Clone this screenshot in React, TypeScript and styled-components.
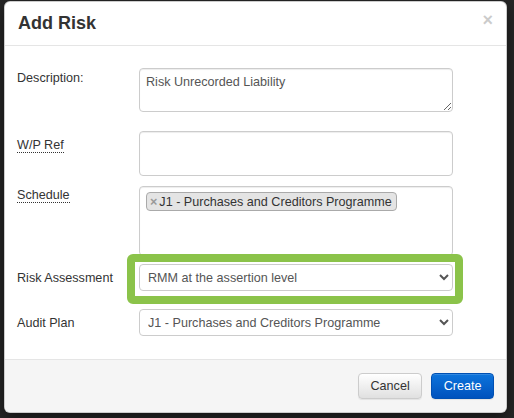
import styled, { createGlobalStyle } from "styled-components";

const GlobalStyle = createGlobalStyle`
  html, body {
    margin: 0;
    padding: 0;
    background: #262626;
  }
  body {
    font-family: "Liberation Sans", Arial, sans-serif;
    font-size: 12.6px;
    color: #333;
  }
  * {
    box-sizing: border-box;
  }
`

const Backdrop = styled.div`
  width: 514px;
  height: 418px;
  padding: 1px 0 0 4px;
  background: #262626;
`

const Modal = styled.div`
  width: 503px;
  background: #fff;
  border: 1px solid rgba(0, 0, 0, 0.2);
  border-radius: 6px;
  overflow: hidden;
  box-shadow: 0 5px 15px rgba(0, 0, 0, 0.5);
`

const Header = styled.div`
  display: flex;
  justify-content: space-between;
  align-items: center;
  height: 44px;
  padding: 0 13px 0 13px;
  border-bottom: 1px solid #e5e5e5;
`

const Title = styled.h4`
  margin: 0;
  font-size: 18px;
  font-weight: bold;
  color: #333;
`

const Close = styled.button`
  align-self: flex-start;
  margin-top: 9px;
  padding: 0;
  border: 0;
  background: none;
  font-family: "Liberation Sans", Arial, sans-serif;
  font-size: 18px;
  font-weight: bold;
  line-height: 1;
  color: #000;
  opacity: 0.2;
`

const Body = styled.div`
  padding: 22px 53px 23px 12px;
`

const FormGroup = styled.div<{ $gap: number }>`
  display: grid;
  grid-template-columns: 122px 314px;
  margin-bottom: ${p => p.$gap}px;
`

const Label = styled.label<{ $offset: number }>`
  padding-top: ${p => p.$offset}px;
  font-size: 12.6px;
  line-height: 18px;
  color: #333;
`

const Abbr = styled.span`
  border-bottom: 1px dotted #333;
`

const TextArea = styled.textarea<{ $height: number }>`
  display: block;
  width: 100%;
  height: ${p => p.$height}px;
  margin: 0;
  padding: 4px 6px;
  border: 1px solid #ccc;
  border-radius: 4px;
  box-shadow: inset 0 1px 1px rgba(0, 0, 0, 0.075);
  font-family: "Liberation Sans", Arial, sans-serif;
  font-size: 12.6px;
  line-height: 18px;
  color: #555;
  resize: vertical;
`

const TagBox = styled.div`
  height: 70px;
  padding: 5px 6px;
  border: 1px solid #ccc;
  border-radius: 4px;
  box-shadow: inset 0 1px 1px rgba(0, 0, 0, 0.075);
  background: #fff;
`

const Tag = styled.span`
  display: inline-flex;
  align-items: center;
  height: 19px;
  padding: 0 4px 0 3px;
  border: 1px solid #aaa;
  border-radius: 4px;
  background: #e4e4e4;
  font-size: 12.6px;
  color: #333;
`

const TagRemove = styled.span`
  margin-right: 2px;
  font-weight: bold;
  color: #999;
`

const Highlight = styled.div`
  position: relative;

  &::after {
    content: '';
    position: absolute;
    top: -10px;
    left: -12px;
    right: -10px;
    bottom: -13px;
    border: 8px solid #8bc34a;
    border-radius: 6px;
    pointer-events: none;
  }
`

const Select = styled.select`
  display: block;
  width: 100%;
  height: 27px;
  margin: 0;
  padding: 0 4px;
  border: 1px solid #ccc;
  border-radius: 4px;
  background: #fff;
  font-family: "Liberation Sans", Arial, sans-serif;
  font-size: 12.6px;
  color: #555;
`

const Footer = styled.div`
  display: flex;
  justify-content: flex-end;
  gap: 9px;
  padding: 13px 12px;
  border-top: 1px solid #e5e5e5;
  background: #f5f5f5;
`

const Button = styled.button<{ $primary?: boolean }>`
  height: 26px;
  padding: 0 11.5px;
  border: 1px solid ${p => (p.$primary ? "#0050b3" : "#ccc")};
  border-radius: 4px;
  background: ${p =>
    p.$primary
      ? "linear-gradient(to bottom, #0d74dc 0%, #0052bd 100%)"
      : "linear-gradient(to bottom, #fff 0%, #e0e0e0 100%)"};
  box-shadow: inset 0 1px 0 rgba(255, 255, 255, 0.15), 0 1px 1px rgba(0, 0, 0, 0.075);
  font-family: "Liberation Sans", Arial, sans-serif;
  font-size: 12.6px;
  color: ${p => (p.$primary ? "#fff" : "#333")};
`

export default function App() {
  return (
    <>
      <GlobalStyle/>
      <Backdrop>
        <Modal>
          <Header>
            <Title>Add Risk</Title>
            <Close type="button">×</Close>
          </Header>
          <Body>
            <FormGroup $gap={19}>
              <Label $offset={1}>Description:</Label>
              <TextArea $height={44} defaultValue="Risk Unrecorded Liability"/>
            </FormGroup>
            <FormGroup $gap={10}>
              <Label $offset={5}><Abbr>W/P Ref</Abbr></Label>
              <TextArea as="input" $height={45}/>
            </FormGroup>
            <FormGroup $gap={8}>
              <Label $offset={0}><Abbr>Schedule</Abbr></Label>
              <TagBox>
                <Tag><TagRemove>×</TagRemove>J1 - Purchases and Creditors Programme</Tag>
              </TagBox>
            </FormGroup>
            <FormGroup $gap={18}>
              <Label $offset={5}>Risk Assessment</Label>
              <Highlight>
                <Select defaultValue="rmm">
                  <option value="rmm">RMM at the assertion level</option>
                </Select>
              </Highlight>
            </FormGroup>
            <FormGroup $gap={0}>
              <Label $offset={5}>Audit Plan</Label>
              <Select defaultValue="j1">
                <option value="j1">J1 - Purchases and Creditors Programme</option>
              </Select>
            </FormGroup>
          </Body>
          <Footer>
            <Button type="button">Cancel</Button>
            <Button type="button" $primary>Create</Button>
          </Footer>
        </Modal>
      </Backdrop>
    </>
  )
}
